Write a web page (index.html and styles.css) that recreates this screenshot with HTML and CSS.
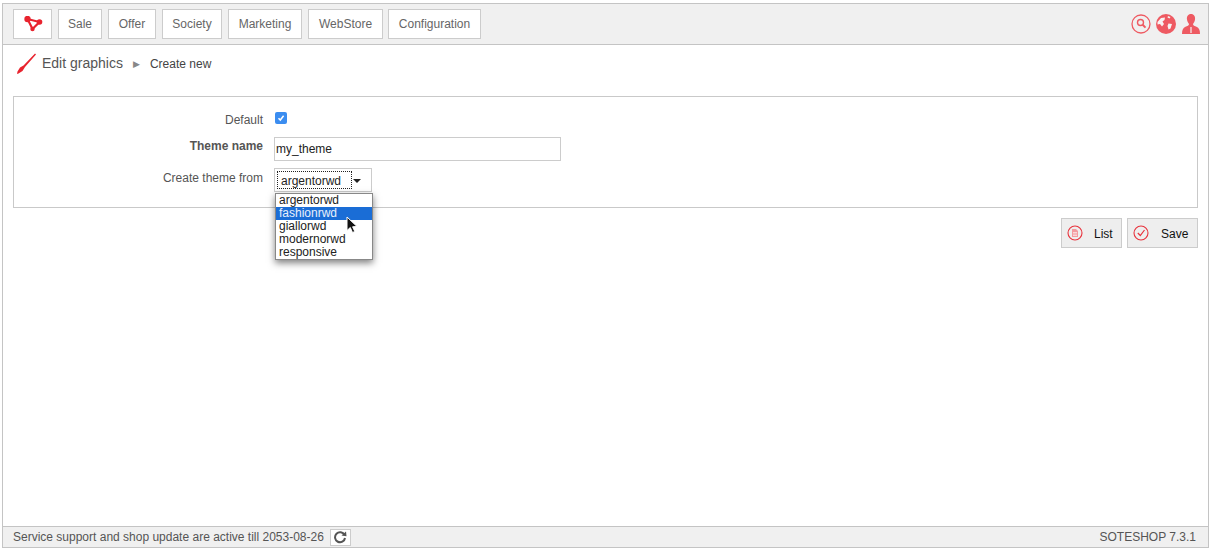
FILE: index.html
```html
<!DOCTYPE html>
<html lang="en">
<head>
<meta charset="utf-8">
<title>Edit graphics</title>
<link rel="stylesheet" href="styles.css">
</head>
<body>
<div class="frame">
  <header class="topbar">
    <nav class="menu">
      <a class="menu-btn logo-btn"><svg width="20" height="16" viewBox="0 0 20 16"><path d="M4.500 3 L16.500 6 L9.500 13 Z" fill="none" stroke="#e8232e" stroke-width="2.200"/><circle cx="4.500" cy="3" r="3.200" fill="#e8232e"/><circle cx="16.500" cy="6" r="2.800" fill="#e8232e"/><circle cx="9.500" cy="13" r="2.200" fill="#e8232e"/></svg></a>
      <a class="menu-btn w-sale">Sale</a>
      <a class="menu-btn w-offer">Offer</a>
      <a class="menu-btn w-society">Society</a>
      <a class="menu-btn w-marketing">Marketing</a>
      <a class="menu-btn w-webstore">WebStore</a>
      <a class="menu-btn w-config">Configuration</a>
    </nav>
    <div class="tools">
      <svg width="20" height="20" viewBox="0 0 20 20"><circle cx="10" cy="10" r="9" fill="none" stroke="#ee5a62" stroke-width="1.300"/><circle cx="9.500" cy="8.500" r="3" fill="none" stroke="#ee5a62" stroke-width="1.400"/><path d="M11.700 10.800 L14.500 13.600" stroke="#ee5a62" stroke-width="2"/></svg>
      <svg width="20" height="20" viewBox="0 0 20 20"><circle cx="10" cy="10" r="10" fill="#ee5a62"/><path d="M1.500 8 L5 4 L9 3.500 L8.500 6 L6.500 7.500 L8 10 L6 12.500 L4 10 L1.500 10.500 Z M12.500 9.500 L16 10 L14.500 14.500 L12.500 15.500 L11.500 12 Z M12 2 L14.500 3 L13.500 4.500 L11.500 3.500 Z" fill="#f7f3f3"/></svg>
      <svg class="person" width="18" height="22" viewBox="0 0 18 22"><path d="M9 1 C12 1 13.500 3.500 13 6.500 C12.800 8.500 11.500 10 11 11 C11 12.500 12.500 13 15 14 C17 15 18 17 18 21 L0 21 C0 17 1 15 3 14 C5.500 13 7 12.500 7 11 C6.500 10 5.200 8.500 5 6.500 C4.500 3.500 6 1 9 1 Z" fill="#ee5a62"/><path d="M9 14 L9 20" stroke="#f7f3f3" stroke-width="1.200"/></svg>
    </div>
  </header>

  <main class="content">
    <div class="crumbs">
      <svg class="brush" width="20" height="22" viewBox="0 0 20 22"><path d="M19 0.500 L20 1.500 L9 14 L6.500 18 L2.500 20.500 L1 21 L1.500 18.500 L4 14.500 L7.500 12.500 Z" fill="#e8232e"/></svg>
      <span class="crumb-main">Edit graphics</span>
      <span class="crumb-sep">▶</span>
      <span class="crumb-sub">Create new</span>
    </div>

    <form class="panel">
      <div class="row row-default">
        <label class="row-label">Default</label>
        <span class="check"><svg width="12" height="12" viewBox="0 0 12 12"><path d="M3.500 6.200 L5.300 8 L8.600 3.800" fill="none" stroke="#fff" stroke-width="1.500"/></svg></span>
      </div>
      <div class="row row-name">
        <label class="row-label strong">Theme name</label>
        <span class="text-input">my_theme</span>
      </div>
      <div class="row row-from">
        <label class="row-label">Create theme from</label>
        <div class="select">
          <span class="select-value">argentorwd</span>
          <span class="select-arrow"></span>
          <ul class="dropdown">
            <li>argentorwd</li>
            <li class="active">fashionrwd</li>
            <li>giallorwd</li>
            <li>modernorwd</li>
            <li>responsive</li>
          </ul>
          <svg class="cursor" width="13" height="19" viewBox="0 0 13 19"><path d="M1 1 L1 14.500 L4.300 11.500 L6.500 16.500 L8.800 15.500 L6.600 10.800 L11 10.500 Z" fill="#111" stroke="#fff" stroke-width="1"/></svg>
        </div>
      </div>
    </form>

    <div class="actions">
      <button class="action" type="button"><svg width="16" height="16" viewBox="0 0 16 16"><circle cx="8" cy="8" r="7" fill="none" stroke="#e8323c" stroke-width="1.100"/><path d="M5 4 H9 L11 6 V12 H5 Z" fill="#f39a9f"/><path d="M6 7.500 H10 M6 9 H10 M6 10.500 H10" stroke="#fff" stroke-width=".6"/></svg><span class="action-label">List</span></button>
      <button class="action action-save" type="button"><svg width="16" height="16" viewBox="0 0 16 16"><circle cx="8" cy="8" r="7" fill="none" stroke="#e8323c" stroke-width="1.100"/><path d="M4.800 8 L7.300 10.500 L11.500 5" fill="none" stroke="#e8323c" stroke-width="1.200"/></svg><span class="action-label">Save</span></button>
    </div>
  </main>

  <footer class="statusbar">
    <div class="status-left">
      <span>Service support and shop update are active till 2053-08-26</span>
      <span class="refresh"><svg width="14" height="14" viewBox="0 0 14 14"><path d="M11.500 5 A5 5 0 1 0 12 8" fill="none" stroke="#555" stroke-width="2"/><path d="M8.500 5.500 L13.500 6.200 L13 1.500 Z" fill="#555"/></svg></span>
    </div>
    <span>SOTESHOP 7.3.1</span>
  </footer>
</div>
</body>
</html>
```

FILE: styles.css
```css
* { box-sizing: border-box; }

html, body { height: 100%; }

body {
  margin: 0;
  padding: 3px 2px 3px 2px;
  background: #fff;
  font-family: "Liberation Sans", Arial, sans-serif;
  font-size: 12px;
  color: #555;
}

.frame {
  height: 545px;
  border: 1px solid #c4c4c4;
  display: flex;
  flex-direction: column;
}

.topbar {
  height: 41px;
  flex: none;
  background: #f0f0f0;
  border-bottom: 1px solid #c4c4c4;
  padding: 5px 8px 0 10px;
  display: flex;
  justify-content: space-between;
}

.menu { display: flex; gap: 6px; }

.menu-btn {
  height: 30px;
  background: #fff;
  border: 1px solid #ccc;
  display: flex;
  align-items: center;
  justify-content: center;
  color: #666;
}

.logo-btn { width: 39px; }
.w-sale { width: 44px; }
.w-offer { width: 48px; }
.w-society { width: 60px; }
.w-marketing { width: 74px; }
.w-webstore { width: 75px; margin-right: -1px; }
.w-config { width: 93px; }

.tools {
  display: flex;
  align-items: center;
  gap: 5px;
  height: 30px;
}

.person { margin-left: 1px; }

.content {
  flex: 1;
  padding: 0 9px 0 10px;
}

.crumbs {
  height: 36px;
  display: flex;
  align-items: center;
  padding-left: 3px;
}

.brush { margin-right: 6px; margin-top: 2px; }

.crumb-main { font-size: 14px; color: #555; }

.crumb-sep { font-size: 9px; color: #888; margin: 1px 10px 0; }

.crumb-sub { color: #444; padding-top: 2px; }

.panel {
  margin-top: 15px;
  height: 112px;
  border: 1px solid #c9c9c9;
  padding-top: 13px;
  width: 1185px;
}

.row { display: flex; }
.row-default { height: 27px; }
.row-name { height: 31px; }

.row-label {
  width: 250px;
  text-align: right;
  padding-top: 3px;
  padding-right: 1px;
  color: #555;
}

.row-name .row-label { padding-top: 2px; }
.row-from .row-label { padding-top: 3px; }

.strong { font-weight: bold; }

.check {
  width: 12px;
  height: 12px;
  margin: 2px 0 0 11px;
  background: #3b8df0;
  border-radius: 2px;
  display: block;
}

.check svg { display: block; }

.text-input {
  width: 287px;
  height: 24px;
  margin-left: 10px;
  border: 1px solid #ccc;
  background: #fff;
  color: #222;
  padding: 4px 0 0 1px;
  font-size: 12px;
}

.select {
  position: relative;
  width: 98px;
  height: 24px;
  margin-left: 10px;
  border: 1px solid #ccc;
  background: #fff;
}

.select-value {
  position: absolute;
  left: 2px;
  top: 2px;
  width: 75px;
  height: 18px;
  border: 1px dotted #222;
  color: #222;
  padding: 2px 0 0 3px;
}

.select-arrow {
  position: absolute;
  left: 78px;
  top: 10px;
  border-left: 4px solid transparent;
  border-right: 4px solid transparent;
  border-top: 4px solid #222;
}

.dropdown {
  position: absolute;
  left: 0;
  top: 24px;
  width: 98px;
  margin: 0;
  padding: 0;
  list-style: none;
  background: #fff;
  border: 1px solid #888;
  box-shadow: 0 3px 7px rgba(0, 0, 0, .5);
  color: #222;
  z-index: 2;
}

.dropdown li {
  height: 13px;
  line-height: 13px;
  padding-left: 3px;
}

.dropdown .active {
  background: #1a6dd6;
  color: #e8f0fb;
}

.cursor {
  position: absolute;
  left: 71px;
  top: 47px;
  z-index: 3;
}

.actions {
  display: flex;
  justify-content: flex-end;
  gap: 5px;
  width: 1185px;
  margin-top: 10px;
}

.action {
  height: 30px;
  width: 61px;
  padding: 0 0 0 5px;
  background: #eee;
  border: 1px solid #ccc;
  display: flex;
  align-items: center;
  gap: 11px;
  font: 12px "Liberation Sans", Arial, sans-serif;
  color: #111;
}

.action-save { width: 71px; gap: 12px; }

.action-label { padding-top: 1px; }

.statusbar {
  height: 21px;
  flex: none;
  background: #f0f0f0;
  border-top: 1px solid #c4c4c4;
  padding: 0 12px 0 10px;
  display: flex;
  align-items: center;
  justify-content: space-between;
  color: #555;
}

.status-left { display: flex; align-items: center; gap: 6px; }

.refresh {
  width: 21px;
  height: 17px;
  background: #fff;
  border: 1px solid #ccc;
  display: flex;
  align-items: center;
  justify-content: center;
}
```
